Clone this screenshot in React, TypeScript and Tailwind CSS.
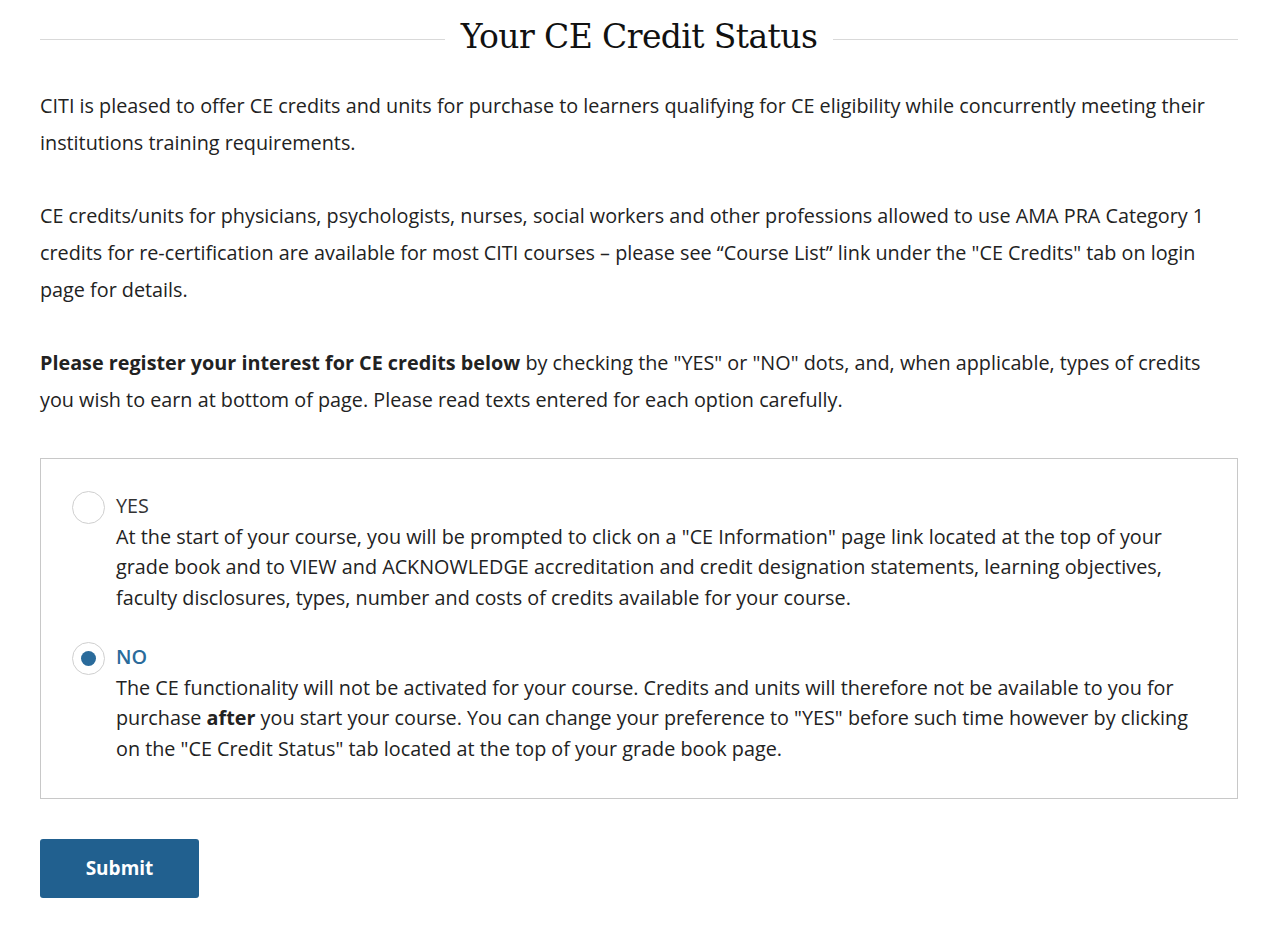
import { useState } from 'react';

const options = [
    {
        value: 'yes',
        label: 'YES',
        body: (
            <>
                At the start of your course, you will be prompted to click on a "CE Information" page link located at the top of your grade book and to VIEW and ACKNOWLEDGE accreditation and credit designation statements, learning objectives, faculty disclosures, types, number and costs of credits available for your course.
            </>
        ),
    },
    {
        value: 'no',
        label: 'NO',
        body: (
            <>
                The CE functionality will not be activated for your course. Credits and units will therefore not be available to you for purchase <b className="font-bold">after</b> you start your course. You can change your preference to "YES" before such time however by clicking on the "CE Credit Status" tab located at the top of your grade book page.
            </>
        ),
    },
];

const App = () => {
    const [choice, setChoice] = useState('no');

    return (
        <div className="min-h-screen bg-white font-['Open_Sans',sans-serif] text-[#222]">
            <div className="ml-[40px] w-[1198px] pt-[14px]">
                {/* Title with rules either side */}
                <div className="flex items-center gap-4">
                    <div className="mt-[4px] h-px flex-1 bg-[#d9d9d9]"></div>
                    <h1 className="font-['DejaVu_Serif',serif] text-[33px] leading-[46px] tracking-[-0.6px] text-[#111]">
                        Your CE Credit Status
                    </h1>
                    <div className="mt-[4px] h-px flex-1 bg-[#d9d9d9]"></div>
                </div>

                <div className="mt-[27px] max-w-[1180px] text-[19.8px] leading-[37px]">
                    <p>
                        CITI is pleased to offer CE credits and units for purchase to learners qualifying for CE eligibility while concurrently meeting their institutions training requirements.
                    </p>
                    <p className="mt-[36px]">
                        CE credits/units for physicians, psychologists, nurses, social workers and other professions allowed to use AMA PRA Category 1 credits for re-certification are available for most CITI courses – please see “Course List” link under the "CE Credits" tab on login page for details.
                    </p>
                    <p className="mt-[36px]">
                        <b className="font-bold">Please register your interest for CE credits below</b> by checking the "YES" or "NO" dots, and, when applicable, types of credits you wish to earn at bottom of page. Please read texts entered for each option carefully.
                    </p>
                </div>

                {/* Options box */}
                <div className="mt-[40px] border border-[#c8c8c8] pt-[32px] pb-[34px] pl-[31px] pr-[40px]">
                    {options.map((opt, i) => (
                        <label
                            key={opt.value}
                            className={`flex cursor-pointer gap-[11px] ${i > 0 ? 'mt-[29px]' : ''}`}
                        >
                            <span className="flex h-[33px] w-[33px] shrink-0 items-center justify-center rounded-full border border-[#cfcfcf] bg-white">
                                <input
                                    type="radio"
                                    name="ce"
                                    value={opt.value}
                                    checked={choice === opt.value}
                                    onChange={() => setChoice(opt.value)}
                                    className="sr-only"
                                />
                                {choice === opt.value && (
                                    <span className="h-[15px] w-[15px] rounded-full bg-[#2a6b9b]"></span>
                                )}
                            </span>
                            <span className="text-[19.8px] leading-[30.5px]">
                                <span
                                    className={`block ${choice === opt.value ? 'font-semibold text-[#2a6b9b]' : 'text-[#333]'}`}
                                >
                                    {opt.label}
                                </span>
                                <span className="block text-[#222]">{opt.body}</span>
                            </span>
                        </label>
                    ))}
                </div>

                <button className="mt-[40px] h-[59px] w-[159px] rounded-[3px] bg-[#21608f] text-[19px] font-bold text-white">
                    Submit
                </button>
            </div>
        </div>
    );
};

export default App;
